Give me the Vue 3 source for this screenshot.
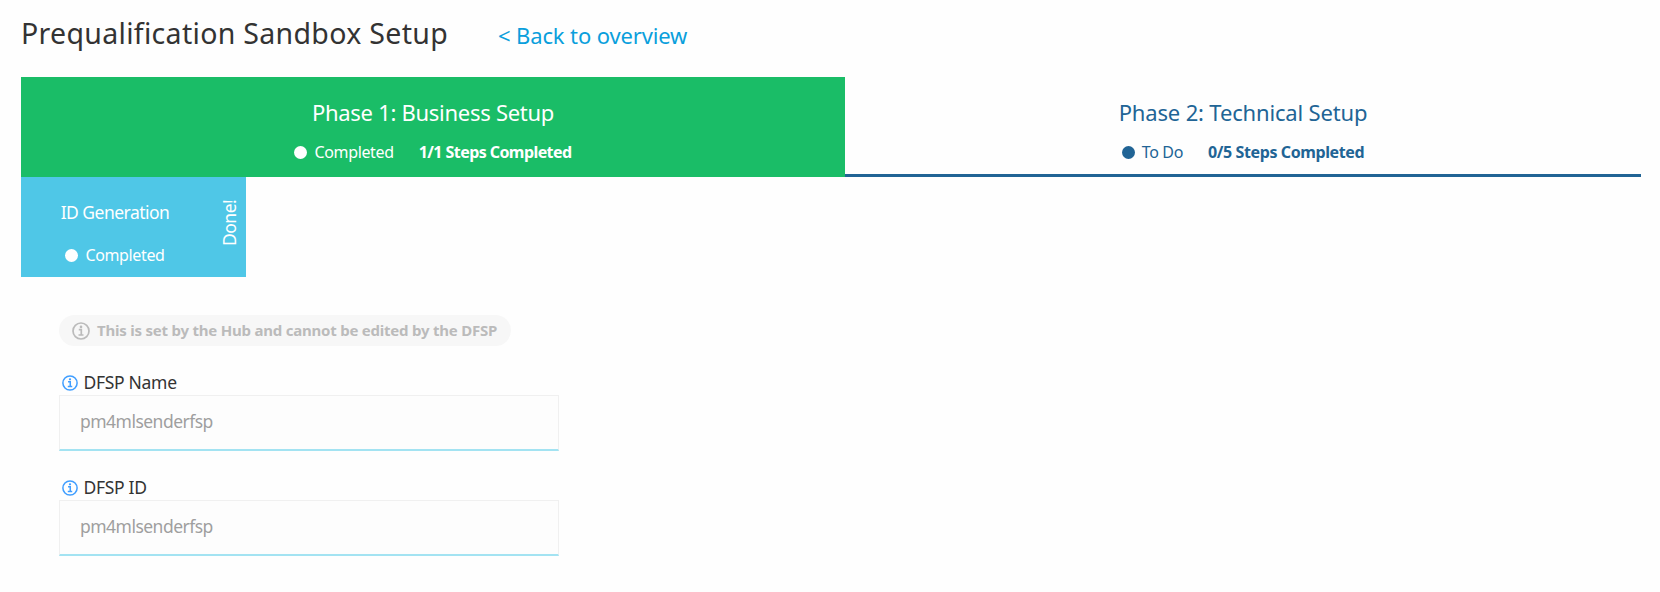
<script setup>
const phases = [
  { title: 'Phase 1: Business Setup', status: 'Completed', steps: '1/1 Steps Completed', kind: 'done' },
  { title: 'Phase 2: Technical Setup', status: 'To Do', steps: '0/5 Steps Completed', kind: 'todo' },
]
const fields = [
  { label: 'DFSP Name', value: 'pm4mlsenderfsp' },
  { label: 'DFSP ID', value: 'pm4mlsenderfsp' },
]
</script>

<template>
  <main class="page">
    <header class="head">
      <h1 class="title">Prequalification Sandbox Setup</h1>
      <a class="back">&lt; Back to overview</a>
    </header>
    <nav class="phases">
      <section v-for="p in phases" :key="p.title" class="phase" :class="p.kind">
        <h2>{{ p.title }}</h2>
        <div class="status">
          <i class="dot"></i><span class="state">{{ p.status }}</span><b>{{ p.steps }}</b>
        </div>
      </section>
    </nav>
    <section class="step">
      <div class="step-main">
        <span class="step-name">ID Generation</span>
        <div class="step-status"><i class="dot"></i><span class="state">Completed</span></div>
      </div>
      <span class="flag">Done!</span>
    </section>
    <form class="form">
      <div class="note">
        <svg class="note-icon" viewBox="0 0 18 18"><circle cx="9" cy="9" r="8" /><path d="M6.8 7.6h2.5v5M6.5 13h5" /><circle class="pt" cx="9" cy="4.9" r="1.3" /></svg>
        <span>This is set by the Hub and cannot be edited by the DFSP</span>
      </div>
      <div v-for="f in fields" :key="f.label" class="field">
        <label>
          <svg class="label-icon" viewBox="0 0 18 18"><circle cx="9" cy="9" r="8" /><path d="M6.8 7.6h2.5v5M6.5 13h5" /><circle class="pt" cx="9" cy="4.9" r="1.3" /></svg>
          <span>{{ f.label }}</span>
        </label>
        <div class="input"><span>{{ f.value }}</span></div>
      </div>
    </form>
  </main>
</template>

<style>
body { background: #fefefe; }
</style>
<style scoped>
.page { box-sizing: border-box; width: 1660px; height: 592px; padding: 13px 19px 0 21px; font-family: "Noto Sans", sans-serif; white-space: nowrap; overflow: hidden; }
h1, h2 { margin: 0; font-weight: 400; }
.head { display: flex; height: 64px; }
.title { width: 477px; font-size: 28.5px; line-height: 40px; letter-spacing: 0.31px; color: #333; }
.back { font-size: 22px; line-height: 45px; letter-spacing: -0.13px; color: #0a9fdc; }
.phases { display: flex; height: 100px; }
.phase { box-sizing: border-box; display: flex; flex-direction: column; align-items: center; padding-top: 20px; }
.done { width: 824px; background: #1abd67; color: #fff; }
.todo { width: 796px; border-bottom: 3px solid #216495; color: #216495; }
.phase h2 { font-size: 22px; line-height: 31px; letter-spacing: -0.28px; }
.todo h2 { letter-spacing: -0.16px; }
.status { display: flex; align-items: center; height: 24px; margin-top: 12px; font-size: 16px; }
.dot { width: 13px; height: 13px; border-radius: 50%; background: currentColor; }
.state { margin-left: 7px; letter-spacing: -0.35px; }
b { margin-left: 25px; letter-spacing: -0.57px; }
.todo b { letter-spacing: -0.39px; }
.step { display: flex; width: 225px; height: 100px; background: #4fc7e7; color: #fff; }
.step-main { flex: none; display: flex; flex-direction: column; align-items: center; width: 188px; padding-top: 22px; }
.step-name { font-size: 17.5px; line-height: 26px; letter-spacing: -0.52px; }
.step-status { display: flex; align-items: center; height: 24px; margin-top: 18px; font-size: 16px; }
.flag { flex: none; width: 40px; height: 92px; writing-mode: vertical-rl; transform: rotate(180deg); font-size: 17.5px; line-height: 40px; letter-spacing: -0.5px; text-align: center; }
.form { padding: 38px 0 0 38px; }
.note { display: flex; align-items: center; box-sizing: border-box; width: 452px; height: 31px; padding-left: 13px; border-radius: 16px; background: #f7f7f7; color: #bbb; font-size: 15px; font-weight: 700; }
.note span { line-height: 20px; letter-spacing: -0.22px; padding-bottom: 2px; }
svg { fill: none; stroke: currentColor; stroke-width: 1.7; }
svg .pt { fill: currentColor; stroke: none; }
.note-icon { width: 18px; height: 18px; margin-right: 7px; }
.field { height: 105px; }
.note + .field { margin-top: 24px; }
label { display: flex; align-items: center; height: 25px; padding-left: 2px; font-size: 17.5px; color: #333; }
label span { line-height: 24px; letter-spacing: -0.3px; padding-bottom: 1px; }
.label-icon { width: 16px; height: 16px; margin: 0 6px 0 0.5px; color: #409eff; }
.input { box-sizing: border-box; width: 500px; height: 56px; padding-left: 20px; border: 1px solid #f0f0f0; border-bottom: 2px solid #a3e3f2; background: #fdfdfd; color: #9f9f9f; font-size: 17.5px; line-height: 50px; letter-spacing: -0.52px; }
</style>
